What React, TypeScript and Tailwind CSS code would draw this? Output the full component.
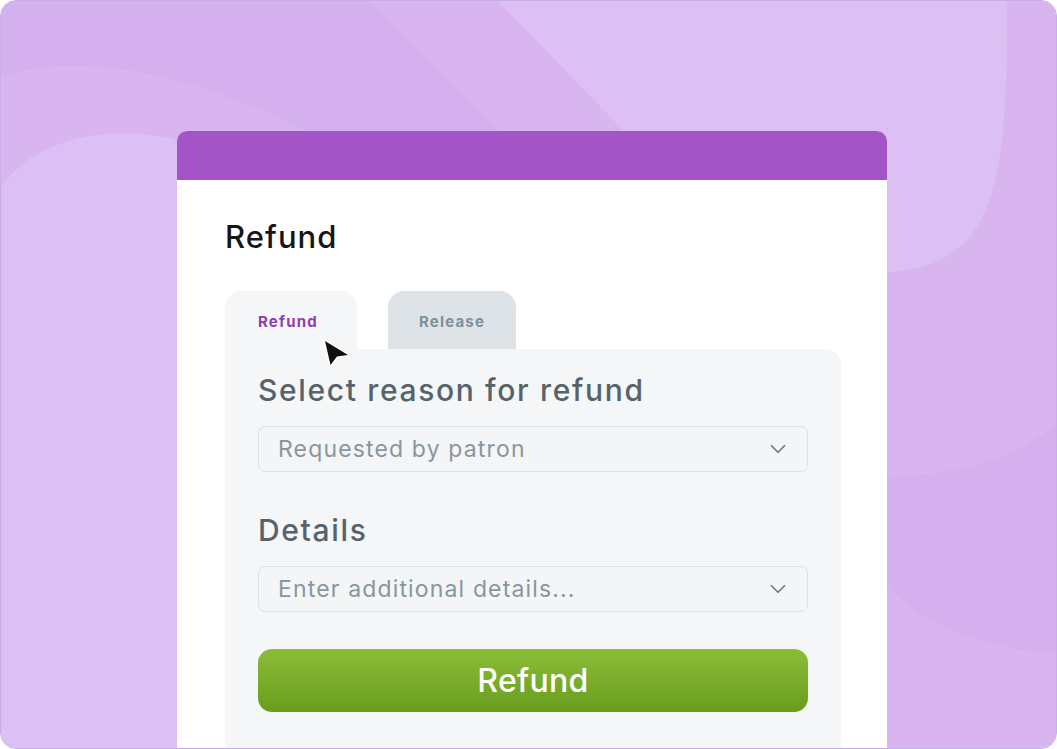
import { ChevronDown } from "lucide-react";

const Backdrop = () => (
  <svg
    className="absolute inset-0 h-full w-full"
    viewBox="0 0 1057 749"
    preserveAspectRatio="none"
  >
    <rect width="1057" height="749" fill="#d9b5f0" />
    <path d="M0 77 C60 55 160 60 300 127 L690 322 L368 0 H0 Z" fill="#d4b0ee" />
    <path
      d="M498 0 H1008 C1008 180 1000 265 888 272 L880 749 H0 V187 C30 140 110 120 177 140 L700 210 L624 130 Z"
      fill="#ddc0f3"
    />
    <path
      d="M880 478 C950 476 1020 460 1057 423 V654 C1000 652 920 630 880 578 Z"
      fill="#d4b0ee"
    />
  </svg>
);

const Cursor = () => (
  <svg
    className="absolute left-[97px] top-[47px]"
    width="30"
    height="32"
    viewBox="-3 -3 30 32"
  >
    <path
      d="M0 0 L23 14 L12 15.5 L5.5 24 Z"
      fill="#111"
      stroke="#fff"
      strokeWidth="4"
      strokeLinejoin="round"
      paintOrder="stroke"
    />
  </svg>
);

const Select = ({ placeholder }: { placeholder: string }) => (
  <div className="flex h-[46px] items-center justify-between rounded-[7px] border-[1.5px] border-[#dde2e5] bg-[#f3f5f6] pl-[19px] pr-[16px]">
    <span className="text-[23px] tracking-[0.05em] text-[#8a969d]">
      {placeholder}
    </span>
    <ChevronDown className="h-[26px] w-[26px] text-[#6f7b82]" strokeWidth={1.6} />
  </div>
);

const App = () => {
  return (
    <div
      className="h-[749px] w-[1057px] bg-white"
      style={{ fontFamily: "Inter, 'Liberation Sans', sans-serif" }}
    >
      <div className="relative h-full w-full overflow-hidden rounded-[16px] border border-[#c9aee6]">
        <Backdrop />
        <div className="relative pl-[176px] pt-[130px]">
          <div className="w-[710px] overflow-hidden rounded-t-[10px] bg-white">
            <div className="h-[49px] bg-[#a355c8]" />
            <div className="px-[48px] pt-[37px]">
              <h1 className="text-[31px] leading-[40px] font-medium tracking-[0.035em] text-[#161616]">
                Refund
              </h1>

              <div className="relative mt-[34px] flex gap-[31px]">
                <div className="flex h-[58px] w-[132px] items-center rounded-t-[16px] bg-[#f4f6f7] pl-[33px] pt-[4px]">
                  <span className="text-[15px] font-bold tracking-[0.08em] text-[#8e3fb0]">
                    Refund
                  </span>
                </div>
                <div className="flex h-[58px] w-[128px] items-center justify-center rounded-t-[16px] bg-[#dde3e6] pt-[4px]">
                  <span className="text-[15px] font-bold tracking-[0.08em] text-[#80909a]">
                    Release
                  </span>
                </div>
                <Cursor />
              </div>

              <div className="w-[616px] rounded-tr-[16px] bg-[#f4f6f7] px-[33px] pt-[23px] pb-[40px]">
                <h2 className="text-[30px] leading-[36px] font-medium tracking-[0.055em] text-[#56636a]">
                  Select reason for refund
                </h2>
                <div className="mt-[18px]">
                  <Select placeholder="Requested by patron" />
                </div>

                <h2 className="mt-[40px] text-[30px] leading-[36px] font-medium tracking-[0.055em] text-[#56636a]">
                  Details
                </h2>
                <div className="mt-[18px]">
                  <Select placeholder="Enter additional details..." />
                </div>

                <button className="mt-[37px] flex h-[63px] w-full items-center justify-center rounded-[14px] bg-gradient-to-b from-[#8bbd37] to-[#699d1e] text-[32px] font-medium tracking-[0.01em] text-white">
                  Refund
                </button>
              </div>
            </div>
          </div>
        </div>
      </div>
    </div>
  );
};

export default App;
